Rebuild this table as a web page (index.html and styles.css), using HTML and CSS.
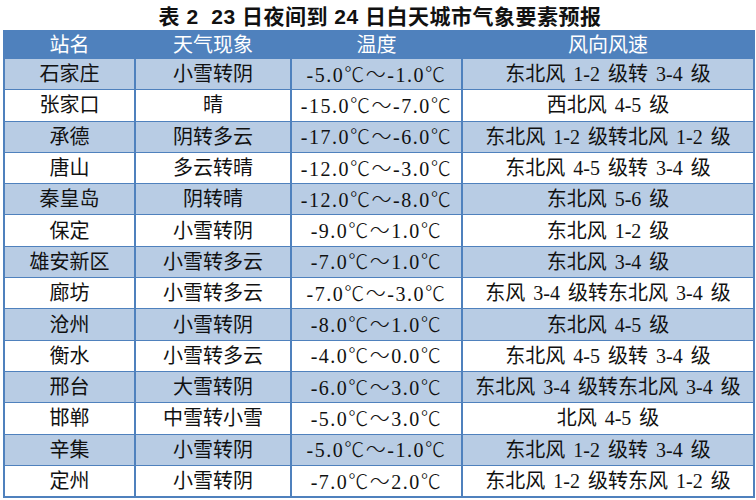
FILE: index.html
```html
<!DOCTYPE html>
<html lang="zh-CN">
<head>
<meta charset="utf-8">
<title>城市气象要素预报</title>
<link rel="stylesheet" href="styles.css">
</head>
<body>
<div class="title">表 2&nbsp; 23 日夜间到 24 日白天城市气象要素预报</div>
<table class="fc">
<colgroup>
<col class="c1"><col class="c2"><col class="c3"><col class="c4">
</colgroup>
<thead>
<tr><th>站名</th><th>天气现象</th><th>温度</th><th>风向风速</th></tr>
</thead>
<tbody>
<tr><td>石家庄</td><td>小雪转阴</td><td>-5.0<span class="deg">℃～</span>-1.0<span class="deg">℃</span></td><td>东北风 1-2 级转 3-4 级</td></tr>
<tr><td>张家口</td><td>晴</td><td>-15.0<span class="deg">℃～</span>-7.0<span class="deg">℃</span></td><td>西北风 4-5 级</td></tr>
<tr><td>承德</td><td>阴转多云</td><td>-17.0<span class="deg">℃～</span>-6.0<span class="deg">℃</span></td><td>东北风 1-2 级转北风 1-2 级</td></tr>
<tr><td>唐山</td><td>多云转晴</td><td>-12.0<span class="deg">℃～</span>-3.0<span class="deg">℃</span></td><td>东北风 4-5 级转 3-4 级</td></tr>
<tr><td>秦皇岛</td><td>阴转晴</td><td>-12.0<span class="deg">℃～</span>-8.0<span class="deg">℃</span></td><td>东北风 5-6 级</td></tr>
<tr><td>保定</td><td>小雪转阴</td><td>-9.0<span class="deg">℃～</span>1.0<span class="deg">℃</span></td><td>东北风 1-2 级</td></tr>
<tr><td>雄安新区</td><td>小雪转多云</td><td>-7.0<span class="deg">℃～</span>1.0<span class="deg">℃</span></td><td>东北风 3-4 级</td></tr>
<tr><td>廊坊</td><td>小雪转多云</td><td>-7.0<span class="deg">℃～</span>-3.0<span class="deg">℃</span></td><td>东风 3-4 级转东北风 3-4 级</td></tr>
<tr><td>沧州</td><td>小雪转阴</td><td>-8.0<span class="deg">℃～</span>1.0<span class="deg">℃</span></td><td>东北风 4-5 级</td></tr>
<tr><td>衡水</td><td>小雪转多云</td><td>-4.0<span class="deg">℃～</span>0.0<span class="deg">℃</span></td><td>东北风 4-5 级转 3-4 级</td></tr>
<tr><td>邢台</td><td>大雪转阴</td><td>-6.0<span class="deg">℃～</span>3.0<span class="deg">℃</span></td><td>东北风 3-4 级转东北风 3-4 级</td></tr>
<tr><td>邯郸</td><td>中雪转小雪</td><td>-5.0<span class="deg">℃～</span>3.0<span class="deg">℃</span></td><td>北风 4-5 级</td></tr>
<tr><td>辛集</td><td>小雪转阴</td><td>-5.0<span class="deg">℃～</span>-1.0<span class="deg">℃</span></td><td>东北风 1-2 级转 3-4 级</td></tr>
<tr><td>定州</td><td>小雪转阴</td><td>-7.0<span class="deg">℃～</span>2.0<span class="deg">℃</span></td><td>东北风 1-2 级转东风 1-2 级</td></tr>
</tbody>
</table>
</body>
</html>
```

FILE: styles.css
```css
html, body {
  margin: 0;
  padding: 0;
  background: #ffffff;
}
body {
  width: 756px;
  height: 500px;
  overflow: hidden;
  font-family: "Liberation Serif", "Noto Sans CJK SC", serif;
  color: #111111;
}
.title {
  height: 30px;
  line-height: 34px;
  text-align: center;
  font-family: "Liberation Sans", "Noto Sans CJK SC", sans-serif;
  font-weight: bold;
  font-size: 21px;
  letter-spacing: 0.5px;
  color: #111111;
  padding-left: 4px;
  box-sizing: border-box;
}
.fc {
  margin-left: 3px;
  border-collapse: collapse;
  table-layout: fixed;
  width: 750px;
  border: 2px solid #4f81bd;
}
.c1 { width: 131px; }
.c2 { width: 156px; }
.c3 { width: 171px; }
.c4 { width: 292px; }
.fc th, .fc td {
  padding: 0;
  text-align: center;
  vertical-align: middle;
  font-size: 20px;
  font-weight: normal;
  white-space: nowrap;
  line-height: 22px;
}
.fc th {
  height: 26px;
  background: #4f81bd;
  color: #ffffff;
  border-left: 2px solid #4f81bd;
  border-right: 2px solid #4f81bd;
}
.fc td {
  height: 30.3px;
  border: 2px solid #4f81bd;
  border-top-width: 1px;
  border-bottom-width: 1px;
}
.fc td:nth-child(3) {
  letter-spacing: 1.5px;
}
.fc td:nth-child(4) {
  word-spacing: 3px;
}
.deg {
  font-family: "Noto Sans CJK SC", sans-serif;
  font-weight: 300;
}
.fc tbody tr:nth-child(odd) td {
  background: #b8cce4;
}
.fc tbody tr:nth-child(even) td {
  background: #ffffff;
}
```
